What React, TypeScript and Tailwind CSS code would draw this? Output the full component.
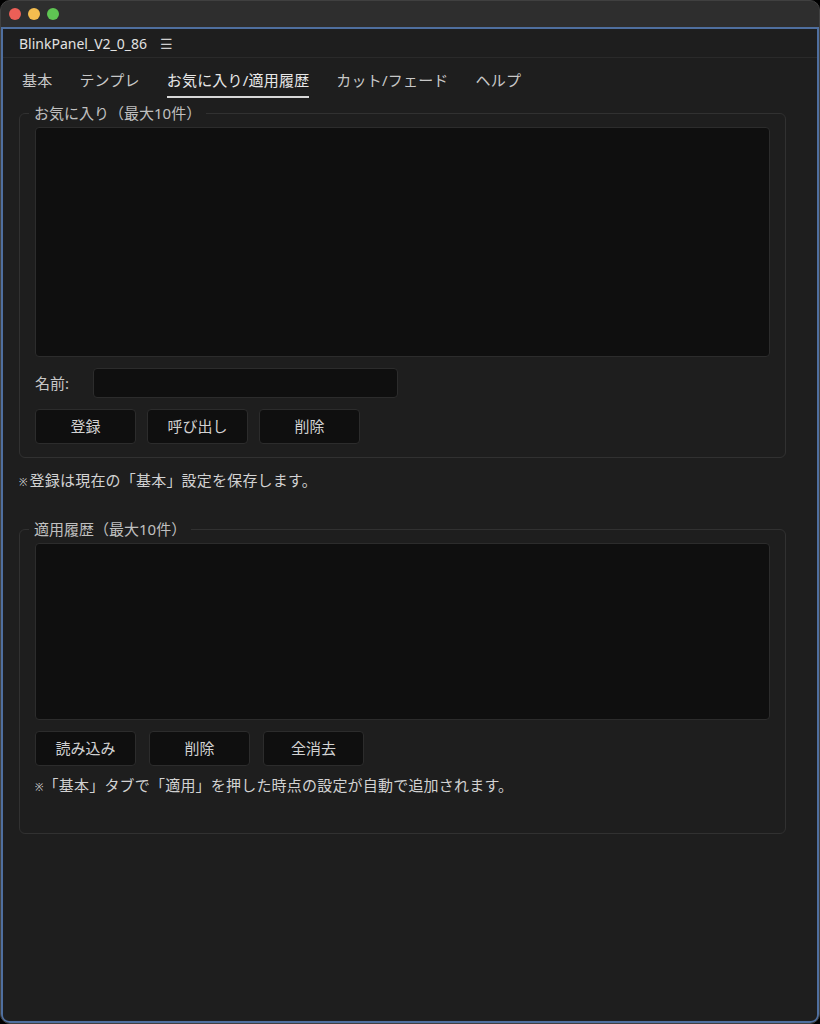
import React from "react";

const font = { fontFamily: '"Noto Sans", "Noto Sans CJK JP", sans-serif' };

function Btn({ label }: { label: string }) {
  return (
    <button className="w-[101px] h-[35px] rounded-[4px] bg-[#0f0f0f] border border-[#2c2c2c] text-[15px] text-[#d2d2d2] leading-none">
      {label}
    </button>
  );
}

export default function App() {
  const tabs = ["基本", "テンプレ", "お気に入り/適用履歴", "カット/フェード", "ヘルプ"];
  return (
    <div className="w-[820px] h-[1024px] bg-black" style={font}>
      <div className="w-[820px] h-[1024px] rounded-[10px] overflow-hidden bg-[#2e2e2e] border border-[#404040] flex flex-col">
        {/* title bar */}
        <div className="h-[26px] flex items-center gap-[7px] pl-[8px] shrink-0">
          <span className="w-[12px] h-[12px] rounded-full bg-[#ec5f57]" />
          <span className="w-[12px] h-[12px] rounded-full bg-[#f4bd4f]" />
          <span className="w-[12px] h-[12px] rounded-full bg-[#5fc553]" />
        </div>
        {/* panel */}
        <div className="flex-1 bg-[#1e1e1e] border-2 border-[#4f6f9f] rounded-b-[8px] flex flex-col">
          <div className="h-[29px] flex items-center pl-[16px] border-b border-[#2a2a2a] shrink-0">
            <span className="text-[14px] text-[#e2e2e2]">BlinkPanel_V2_0_86</span>
            <span className="ml-[13px] text-[14px] text-[#cfcfcf]">☰</span>
          </div>
          {/* tabs */}
          <div className="flex gap-[27px] pl-[19px] pt-[11px] shrink-0">
            {tabs.map((t, i) => (
              <div
                key={t}
                className={
                  "text-[15px] leading-[22px] pb-[5px] border-b-2 tracking-[0.2px] " +
                  (i === 2 ? "text-[#e8e8e8] border-[#d8d8d8]" : "text-[#c8c8c8] border-transparent")
                }
              >
                {t}
              </div>
            ))}
          </div>
          <div className="pl-[16px] pt-[5px]">
            <fieldset className="w-[767px] border border-[#313131] rounded-[6px] px-[15px] pt-[4px] pb-[13px]">
              <legend className="ml-[-6px] px-[5px] text-[15px] leading-[20px] text-[#c0c0c0]">お気に入り（最大10件）</legend>
              <div className="h-[230px] rounded-[4px] bg-[#0f0f0f] border border-[#2c2c2c]" />
              <div className="flex items-center mt-[11px]">
                <span className="w-[58px] text-[15px] text-[#c8c8c8]">名前:</span>
                <div className="w-[305px] h-[30px] rounded-[4px] bg-[#0f0f0f] border border-[#2c2c2c]" />
              </div>
              <div className="flex gap-[11px] mt-[11px]">
                <Btn label="登録" />
                <Btn label="呼び出し" />
                <Btn label="削除" />
              </div>
            </fieldset>
            <div className="mt-[12px] text-[15px] leading-[20px] text-[#d2d2d2] tracking-[0.2px]">
              <span className="text-[10px] mr-[2px]">※</span>登録は現在の「基本」設定を保存します。
            </div>
            <fieldset className="mt-[27px] w-[767px] border border-[#313131] rounded-[6px] px-[15px] pt-[4px] pb-[36px]">
              <legend className="ml-[-6px] px-[5px] text-[15px] leading-[20px] text-[#c0c0c0]">適用履歴（最大10件）</legend>
              <div className="h-[177px] rounded-[4px] bg-[#0f0f0f] border border-[#2c2c2c]" />
              <div className="flex gap-[13px] mt-[11px]">
                <Btn label="読み込み" />
                <Btn label="削除" />
                <Btn label="全消去" />
              </div>
              <div className="mt-[9px] text-[15px] leading-[20px] text-[#d2d2d2] tracking-[0.2px]">
                <span className="text-[10px]">※</span>「基本」タブで「適用」を押した時点の設定が自動で追加されます。
              </div>
            </fieldset>
          </div>
        </div>
      </div>
    </div>
  );
}
